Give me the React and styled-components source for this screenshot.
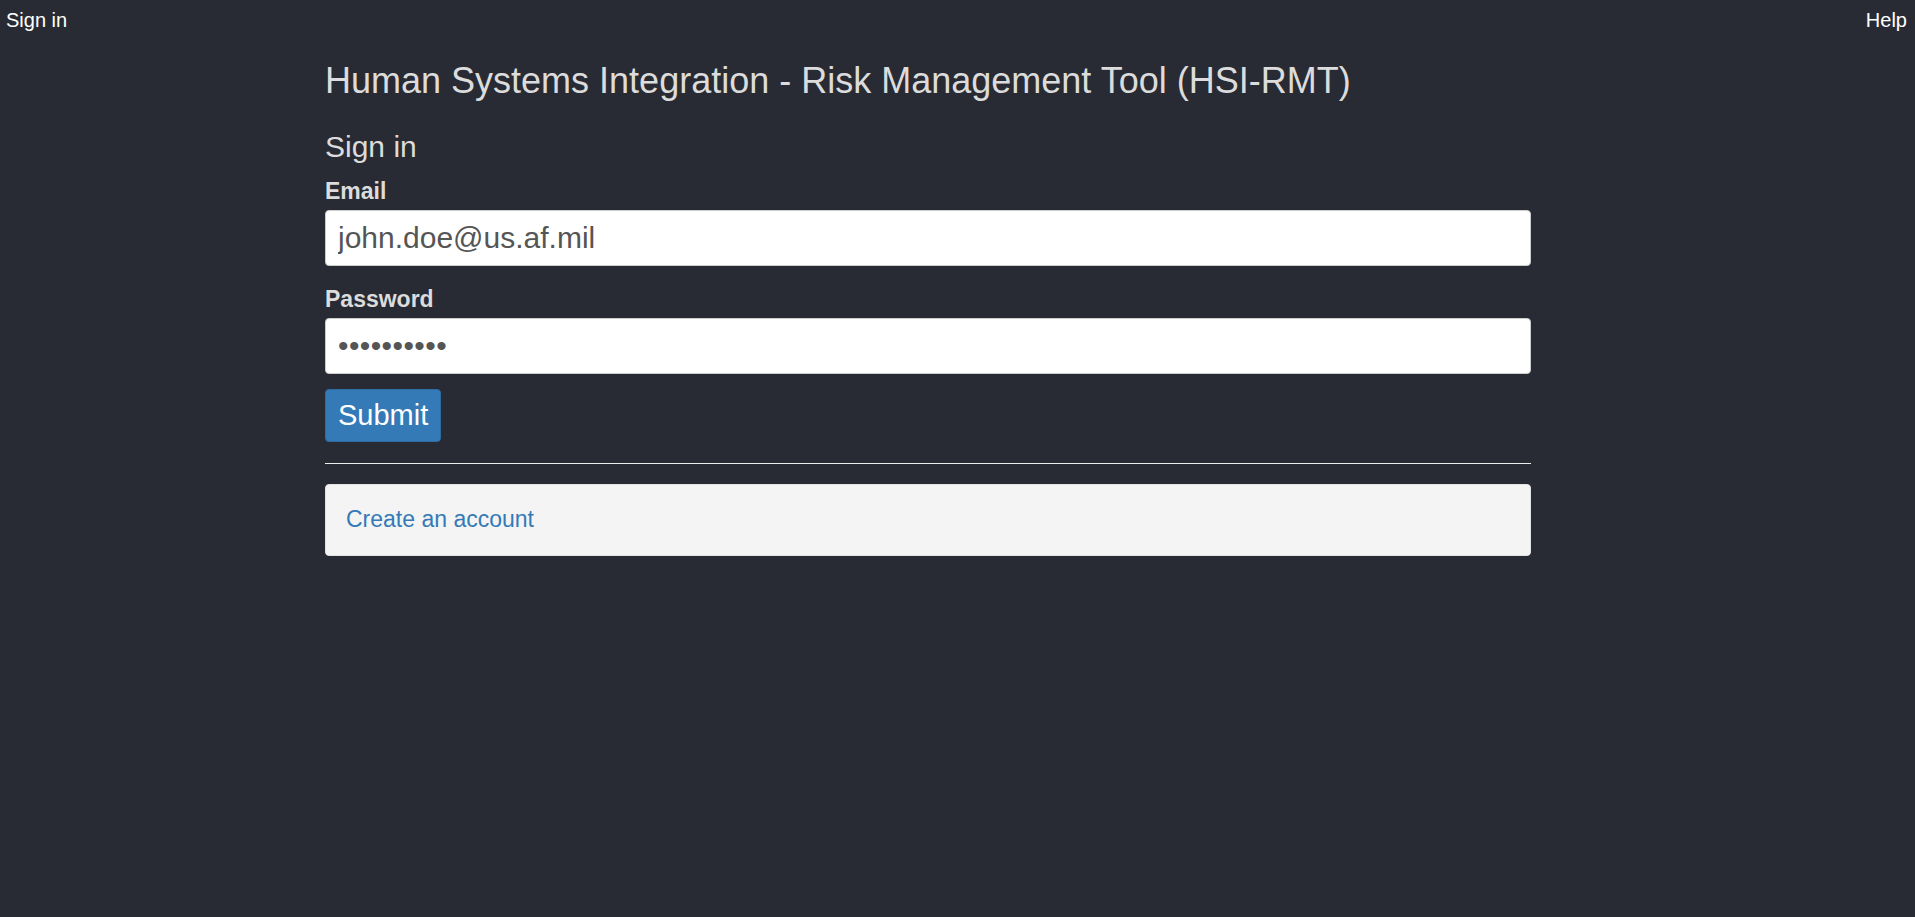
import React from "react";
import styled, { createGlobalStyle } from "styled-components";

const Global = createGlobalStyle`
  html, body { margin: 0; padding: 0; background: #282b33; }
  body { font-family: "Liberation Sans", Arial, sans-serif; color: #dcdcdc; min-height: 917px; }
  * { box-sizing: border-box; }
`;

const TopBar = styled.nav`
  display: flex;
  justify-content: space-between;
  align-items: center;
  height: 40px;
  padding: 0 8px 0 6px;
  margin-bottom: 4px;
`;

const NavLink = styled.a`
  color: #ffffff;
  font-size: 20px;
  text-decoration: none;
  line-height: 40px;
`;

const Main = styled.main`
  margin-left: 325px;
  width: 1206px;
  display: flex;
  flex-direction: column;
`;

const Title = styled.h1`
  font-size: 36px;
  font-weight: 400;
  margin: 17px 0 0;
  line-height: 1.1;
  color: #dcdcdc;
`;

const SubTitle = styled.h2`
  font-size: 30px;
  font-weight: 400;
  margin: 29px 0 0;
  line-height: 1.1;
  color: #dcdcdc;
`;

const Form = styled.form`
  display: flex;
  flex-direction: column;
`;

const Label = styled.label`
  font-size: 23px;
  font-weight: 700;
  color: #dcdcdc;
  margin: ${(p) => p.$top}px 0 6px;
  line-height: 26px;
`;

const Input = styled.input`
  height: 56px;
  width: 100%;
  border: 1px solid #ccc;
  border-radius: 4px;
  background: #fff;
  color: #555;
  font-family: "Liberation Sans", Arial, sans-serif;
  font-size: 30px;
  letter-spacing: ${(p) => (p.type === "password" ? "0.4px" : "normal")};
  padding: 0 12px;
  outline: none;
`;

const Button = styled.button`
  align-self: flex-start;
  margin-top: 15px;
  height: 53px;
  padding: 0 12px;
  background: #337ab7;
  border: 1px solid #2e6da4;
  border-radius: 4px;
  color: #fff;
  font-family: "Liberation Sans", Arial, sans-serif;
  font-size: 29px;
  cursor: pointer;
`;

const Rule = styled.hr`
  margin: 21px 0 0;
  border: 0;
  border-top: 1px solid #eeeeee;
  width: 100%;
`;

const Well = styled.div`
  margin-top: 20px;
  background: #f4f4f4;
  border: 1px solid #e3e3e3;
  border-radius: 4px;
  height: 72px;
  padding: 0 20px;
  display: flex;
  align-items: center;
`;

const AccountLink = styled.a`
  color: #337ab7;
  font-size: 23px;
  text-decoration: none;
`;

export default function App() {
  return (
    <>
      <Global />
      <TopBar>
        <NavLink href="#">Sign in</NavLink>
        <NavLink href="#">Help</NavLink>
      </TopBar>
      <Main>
        <Title>Human Systems Integration - Risk Management Tool (HSI-RMT)</Title>
        <SubTitle>Sign in</SubTitle>
        <Form onSubmit={(e) => e.preventDefault()}>
          <Label $top={15} htmlFor="email">Email</Label>
          <Input id="email" type="email" defaultValue="john.doe@us.af.mil" />
          <Label $top={20} htmlFor="password">Password</Label>
          <Input id="password" type="password" defaultValue="1234567890" />
          <Button type="submit">Submit</Button>
        </Form>
        <Rule />
        <Well>
          <AccountLink href="#">Create an account</AccountLink>
        </Well>
      </Main>
    </>
  );
}
